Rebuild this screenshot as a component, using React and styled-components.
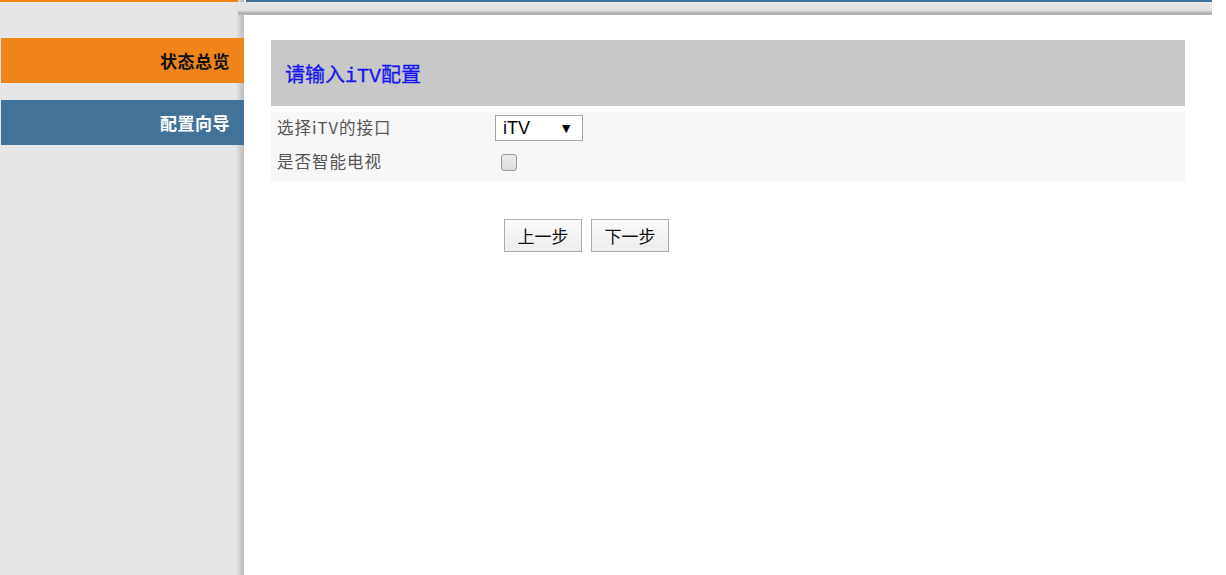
import React, { useState } from 'react'
import styled, { createGlobalStyle } from 'styled-components'

const GlobalStyle = createGlobalStyle`
  html, body {
    margin: 0;
    padding: 0;
    background: #ffffff;
  }
  body {
    font-family: "Noto Sans CJK SC", "Liberation Sans", sans-serif;
  }
`

const navItems = [
  { id: 'status', label: '状态总览', tone: 'orange' },
  { id: 'wizard', label: '配置向导', tone: 'blue' },
]

export default function App() {
  const [port, setPort] = useState('iTV')
  const [smartTv, setSmartTv] = useState(false)

  return (
    <>
      <GlobalStyle />
      <Page>
        <Sidebar>
          <OrangeLine />
          <Nav>
            {navItems.map((item) => (
              <NavItem key={item.id} $tone={item.tone}>
                {item.label}
              </NavItem>
            ))}
          </Nav>
        </Sidebar>

        <Main>
          <BlueLine />
          <TopBar />
          <Content>
            <Card>
              <CardHeader>
                <Title>请输入iTV配置</Title>
              </CardHeader>
              <Rows>
                <Row>
                  <Label>选择iTV的接口</Label>
                  <Field>
                    <SelectBox onClick={() => setPort(port)}>
                      <span>{port}</span>
                      <Arrow>▼</Arrow>
                    </SelectBox>
                  </Field>
                </Row>
                <Row>
                  <Label>是否智能电视</Label>
                  <Field>
                    <Checkbox
                      type="checkbox"
                      checked={smartTv}
                      onChange={() => setSmartTv(!smartTv)}
                    />
                  </Field>
                </Row>
              </Rows>
              <Actions>
                <StepButton type="button">上一步</StepButton>
                <StepButton type="button">下一步</StepButton>
              </Actions>
            </Card>
          </Content>
        </Main>
      </Page>
    </>
  )
}

const Page = styled.div`
  display: grid;
  grid-template-columns: 244px 1fr;
  min-height: 100vh;
`

const Sidebar = styled.aside`
  display: flex;
  flex-direction: column;
  background: linear-gradient(
    to right,
    #e6e6e6 0,
    #e6e6e6 236px,
    #d6d6d6 239px,
    #c4c4c4 242px,
    #bdbdbd 244px
  );
`

const OrangeLine = styled.div`
  width: 238px;
  height: 2px;
  background: #ef841a;
`

const Nav = styled.nav`
  display: flex;
  flex-direction: column;
  gap: 17px;
  padding: 36px 0 0 1px;
`

const NavItem = styled.div`
  height: 45px;
  display: flex;
  align-items: center;
  justify-content: flex-end;
  padding-right: 14px;
  font-size: 17px;
  font-weight: 700;
  letter-spacing: 0.5px;
  color: ${(p) => (p.$tone === 'orange' ? '#111111' : '#ffffff')};
  background: ${(p) => (p.$tone === 'orange' ? '#ef841a' : '#41739a')};
`

const Main = styled.main`
  display: flex;
  flex-direction: column;
  min-width: 0;
`

const BlueLine = styled.div`
  height: 2px;
  margin: 0 14px 0 2px;
  background: #41739a;
`

const TopBar = styled.div`
  height: 13px;
  margin: 0 14px 0 -6px;
  background: linear-gradient(
    to bottom,
    #e6e6e6 0,
    #e2e2e2 8px,
    #c4c4c4 10px,
    #a9a9a9 12px,
    #bdbdbd 13px
  );
`

const Content = styled.div`
  padding: 25px 41px 0 27px;
`

const Card = styled.section`
  display: flex;
  flex-direction: column;
`

const CardHeader = styled.div`
  height: 66px;
  display: flex;
  align-items: center;
  padding-left: 14px;
  background: #c8c8c8;
`

const Title = styled.h2`
  margin: 0;
  font-family: "Liberation Mono", "Noto Sans CJK SC", monospace;
  font-size: 20px;
  font-weight: 400;
  color: #1616ee;
  -webkit-text-stroke: 0.3px #1616ee;
`

const Rows = styled.div`
  display: flex;
  flex-direction: column;
  margin-top: 5px;
  padding: 0 0 3px;
  background: #f7f7f7;
`

const Row = styled.div`
  display: grid;
  grid-template-columns: 224px 1fr;
  align-items: center;
  height: 34px;
`

const Label = styled.div`
  padding: 0 0 3px 6px;
  font-size: 16.5px;
  letter-spacing: 1px;
  color: #555555;
`

const Field = styled.div`
  display: flex;
  align-items: center;
`

const SelectBox = styled.div`
  box-sizing: border-box;
  width: 88px;
  height: 26px;
  display: flex;
  align-items: center;
  justify-content: space-between;
  padding: 0 9px 0 7px;
  border: 1px solid #a6a6a6;
  background: #ffffff;
  font-family: "Liberation Sans", Arial, sans-serif;
  font-size: 18px;
  color: #000000;
  cursor: default;
`

const Arrow = styled.span`
  font-size: 14px;
  line-height: 1;
`

const Checkbox = styled.input`
  appearance: none;
  box-sizing: border-box;
  width: 16px;
  height: 17px;
  margin: 0 0 0 6px;
  border: 1px solid #9a9a9a;
  border-radius: 3px;
  background: linear-gradient(to bottom, #ebebeb, #dcdcdc);

  &:checked {
    background: #dcdcdc;
  }
`

const Actions = styled.div`
  display: flex;
  gap: 9px;
  margin-top: 37px;
  padding-left: 233px;
`

const StepButton = styled.button`
  box-sizing: border-box;
  width: 78px;
  height: 33px;
  padding: 0;
  border: 1px solid #adadad;
  border-radius: 0;
  background: linear-gradient(to bottom, #fbfbfb, #ededed);
  font-family: "Noto Sans CJK SC", "Liberation Sans", sans-serif;
  font-size: 17px;
  color: #111111;
  cursor: pointer;
`
